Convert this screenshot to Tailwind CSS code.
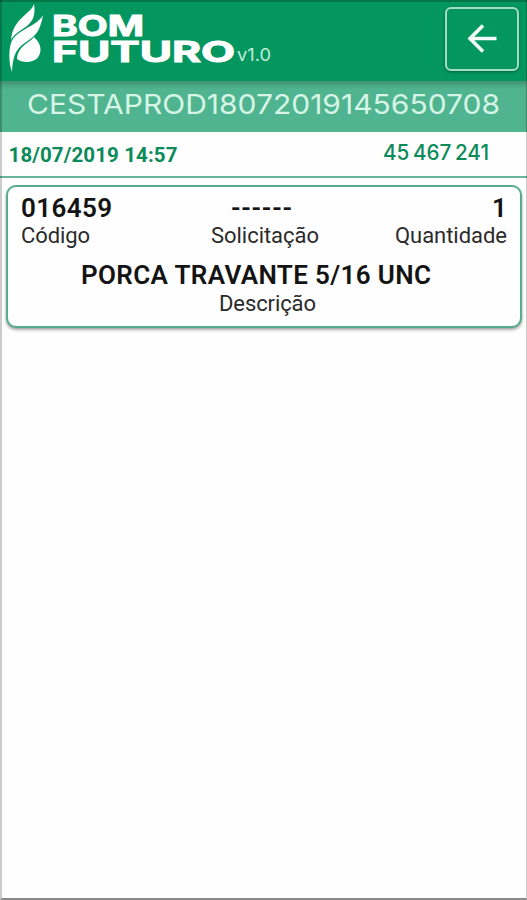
<!DOCTYPE html>
<html lang="pt-BR">
  <head>
    <meta charset="UTF-8" />
    <meta name="viewport" content="width=device-width, initial-scale=1.0" />
    <title>Bom Futuro</title>
    <script src="https://cdn.jsdelivr.net/npm/@tailwindcss/browser@4"></script>
  </head>
  <body class="bg-white font-[Roboto,sans-serif]">
    <div class="relative flex h-[900px] w-[527px] flex-col overflow-hidden bg-[#fefefe]">

      <!-- Header -->
      <header class="flex h-[81px] shrink-0 items-start justify-between border-t-2 border-[#047547] bg-[#03965f] pr-2">
        <svg class="h-[79px] w-[290px]" viewBox="0 2 290 79" fill="#fff">
          <path d="M34 4C31 14 13 18 11 40C16 30 29 29 33.500 17C35 12 34.500 7 34 4Z" />
          <path d="M43 15C37 27 16 29 11 43C8 53 9.500 65 12 72C12.500 64 13 55 19 48C24 42 35 38 39 29C41 24 42.500 19 43 15Z" />
          <path d="M34 37C29 43 18 46 17 59C22 63 32 63 37 58.500C43 52 41 43 34 37Z" />
          <g class="font-[Inter,sans-serif]" font-weight="700" stroke="#fff" stroke-width="1">
            <text x="52" y="35.500" font-size="29" textLength="92" lengthAdjust="spacingAndGlyphs">BOM</text>
            <text x="52" y="61.500" font-size="29" textLength="183" lengthAdjust="spacingAndGlyphs">FUTURO</text>
          </g>
          <text class="font-[Inter,sans-serif]" x="237" y="60.500" font-size="17" fill="#c4ecd9" textLength="34" lengthAdjust="spacingAndGlyphs">v1.0</text>
        </svg>
        <button class="mt-[5px] flex h-[64px] w-[74px] items-center justify-center rounded-[6px] border-2 border-[#a5dcc4] shadow-[0_1px_3px_rgba(0,0,0,0.35)]">
          <svg class="h-[30px] w-[30px]" viewBox="0 0 30 30" fill="none" stroke="#f2fff9" stroke-width="3.600">
            <path d="M29.500 14.500H3M16 1.500L3 14.500L16 27.500" />
          </svg>
        </button>
      </header>

      <!-- Basket code -->
      <div class="h-[51px] shrink-0 bg-[#4fb48f] shadow-[inset_0_6px_4px_-2px_rgba(50,100,75,0.4)]">
        <svg class="h-[51px] w-full" viewBox="0 81 527 51">
          <text class="font-[Inter,sans-serif]" x="27" y="114.200" font-size="27.500" font-weight="400" fill="#d6f5e6" textLength="473" lengthAdjust="spacingAndGlyphs">CESTAPROD18072019145650708</text>
        </svg>
      </div>

      <!-- Date and number -->
      <div class="flex h-[46px] shrink-0 items-center justify-between border-b-2 border-[#6bb597] pr-[36px] pl-2 text-[#0b8a5a]">
        <svg class="h-[44px] w-[200px]" viewBox="8 132 200 44" fill="currentColor">
          <text x="8.500" y="161.500" font-size="20.500" font-weight="700" textLength="169" lengthAdjust="spacing">18/07/2019 14:57</text>
        </svg>
        <svg class="h-[44px] w-[110px]" viewBox="381 132 110 44" fill="currentColor">
          <text class="font-[Inter,sans-serif] [word-spacing:-2px]" x="383" y="160" font-size="21" font-weight="500" textLength="106" lengthAdjust="spacingAndGlyphs">45 467 241</text>
        </svg>
      </div>

      <!-- Item card -->
      <div class="mx-[6px] mt-[7px] h-[143px] w-[516px] shrink-0 rounded-[10px] border-2 border-[#55ad8b] bg-[#fefefe] shadow-[0_2px_3px_rgba(0,0,0,0.35)]">
        <svg class="h-[139px] w-[512px]" viewBox="8 187 512 139" fill="#141414">
          <g font-size="26" font-weight="600">
            <text x="21" y="216.500" textLength="91">016459</text>
            <text x="231" y="216.500" textLength="61">------</text>
            <text x="492" y="216.500">1</text>
            <text x="81" y="283.500" textLength="350">PORCA TRAVANTE 5/16 UNC</text>
          </g>
          <g font-size="22" fill="#2b2b2b">
            <text x="21" y="243" textLength="69">Código</text>
            <text x="211" y="243" textLength="108">Solicitação</text>
            <text x="395" y="243" textLength="112">Quantidade</text>
            <text x="219" y="310.500" textLength="97">Descrição</text>
          </g>
        </svg>
      </div>

      <!-- Screen edge -->
      <div class="pointer-events-none absolute inset-0 border-r border-b-2 border-l-2 border-r-black/20 border-b-[#8a8a8a] border-l-black/20"></div>
    </div>
  </body>
</html>
